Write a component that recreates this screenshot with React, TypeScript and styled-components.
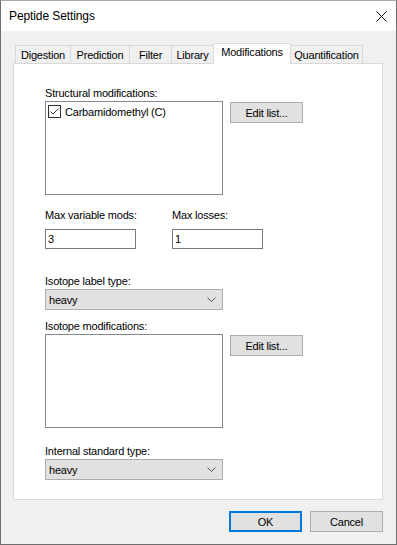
import React from "react";
import styled, { createGlobalStyle } from "styled-components";

const Global = createGlobalStyle`
  html, body { margin: 0; padding: 0; background: #ffffff; }
  * { box-sizing: border-box; }
  body { font-family: "Liberation Sans", Arial, sans-serif; font-size: 11px; color: #000; }
`;

const Window = styled.div`
  width: 397px;
  height: 545px;
  border: 1px solid #6e6e6e;
  border-top-color: #a8a8a8;
  display: flex;
  flex-direction: column;
  background: #f0f0f0;
`;

const TitleBar = styled.div`
  height: 30px;
  background: #ffffff;
  display: flex;
  align-items: center;
  justify-content: space-between;
  padding: 0 9px 0 8px;
`;

const Title = styled.span`
  font-size: 12px;
  letter-spacing: -0.1px;
  color: #000;
`;

const CloseBtn = styled.div`
  width: 12px;
  height: 12px;
  display: flex;
  align-items: center;
  justify-content: center;
`;

const Body = styled.div`
  flex: 1;
  display: flex;
  flex-direction: column;
  padding: 12px 13px 0 12px;
`;

const TabStrip = styled.div`
  height: 20px;
  display: flex;
  align-items: flex-end;
  padding-left: 2px;
  position: relative;
  z-index: 1;
`;

const Tab = styled.div<{ $w: number; $active?: boolean }>`
  width: ${(p) => p.$w}px;
  height: ${(p) => (p.$active ? 21 : 18)}px;
  margin-bottom: ${(p) => (p.$active ? -1 : 0)}px;
  margin-right: -1px;
  border: 1px solid #d9d9d9;
  border-bottom: none;
  background: ${(p) => (p.$active ? "#ffffff" : "#f0f0f0")};
  position: relative;
  z-index: ${(p) => (p.$active ? 2 : 1)};
  display: flex;
  align-items: ${(p) => (p.$active ? "flex-start" : "center")};
  justify-content: center;
  padding-top: ${(p) => (p.$active ? 2 : 0)}px;
  font-size: 11px;
  letter-spacing: -0.2px;
  white-space: nowrap;
`;

const Panel = styled.div`
  height: 437px;
  border: 1px solid #d9d9d9;
  background: #ffffff;
  padding: 22px 0 0 31px;
  display: flex;
  flex-direction: column;
`;

const Label = styled.div<{ $mt?: number }>`
  height: 15px;
  line-height: 15px;
  margin-top: ${(p) => p.$mt ?? 0}px;
  letter-spacing: -0.2px;
  white-space: nowrap;
`;

const Row = styled.div<{ $mt?: number }>`
  display: flex;
  align-items: flex-start;
  margin-top: ${(p) => p.$mt ?? 0}px;
`;

const ListBox = styled.div`
  width: 178px;
  height: 94px;
  border: 1px solid #828790;
  background: #fff;
  padding: 2px 0 0 2px;
`;

const CheckItem = styled.div`
  display: flex;
  align-items: center;
  gap: 4px;
  height: 15px;
  letter-spacing: -0.2px;
`;

const CheckBox = styled.div`
  width: 13px;
  height: 13px;
  border: 1px solid #333333;
  display: flex;
  align-items: center;
  justify-content: center;
  background: #fff;
`;

const Button = styled.div<{ $default?: boolean; $mt?: number; $ml?: number }>`
  width: 73px;
  height: 21px;
  margin-top: ${(p) => p.$mt ?? 0}px;
  margin-left: ${(p) => p.$ml ?? 0}px;
  background: #e1e1e1;
  border: ${(p) => (p.$default ? "2px solid #0078d7" : "1px solid #adadad")};
  display: flex;
  align-items: center;
  justify-content: center;
  letter-spacing: -0.2px;
`;

const Column = styled.div<{ $w: number }>`
  width: ${(p) => p.$w}px;
  display: flex;
  flex-direction: column;
`;

const TextBox = styled.div`
  width: 91px;
  height: 20px;
  margin-top: 6px;
  border: 1px solid #7a7a7a;
  background: #fff;
  padding-left: 2px;
  display: flex;
  align-items: center;
`;

const Combo = styled.div`
  width: 178px;
  height: 21px;
  border: 1px solid #adadad;
  background: #e1e1e1;
  display: flex;
  align-items: center;
  justify-content: space-between;
  padding: 0 6px 0 3px;
  letter-spacing: -0.2px;
`;

const Footer = styled.div`
  display: flex;
  justify-content: flex-end;
  gap: 8px;
  margin-top: 11px;
`;

const Chevron = () => (
  <svg width="9" height="5" viewBox="0 0 9 5">
    <path d="M0.5 0.5 L4.5 4.5 L8.5 0.5" fill="none" stroke="#555" strokeWidth="1" />
  </svg>
);

export default function App() {
  return (
    <>
      <Global />
      <Window>
        <TitleBar>
          <Title>Peptide Settings</Title>
          <CloseBtn>
            <svg width="11" height="11" viewBox="0 0 11 11">
              <path d="M0.5 0.5 L10.5 10.5 M10.5 0.5 L0.5 10.5" stroke="#111" strokeWidth="1" />
            </svg>
          </CloseBtn>
        </TitleBar>
        <Body>
          <TabStrip>
            <Tab $w={56}>Digestion</Tab>
            <Tab $w={60}>Prediction</Tab>
            <Tab $w={43}>Filter</Tab>
            <Tab $w={43}>Library</Tab>
            <Tab $w={78} $active>Modifications</Tab>
            <Tab $w={73}>Quantification</Tab>
          </TabStrip>
          <Panel>
            <Label>Structural modifications:</Label>
            <Row>
              <ListBox>
                <CheckItem>
                  <CheckBox>
                    <svg width="11" height="11" viewBox="0 0 11 11">
                      <path d="M1.5 5.5 L4 8 L9.5 2.5" fill="none" stroke="#333" strokeWidth="1" />
                    </svg>
                  </CheckBox>
                  <span>Carbamidomethyl (C)</span>
                </CheckItem>
              </ListBox>
              <Button $mt={1} $ml={7}>Edit list...</Button>
            </Row>
            <Row $mt={13}>
              <Column $w={127}>
                <Label>Max variable mods:</Label>
                <TextBox>3</TextBox>
              </Column>
              <Column $w={120}>
                <Label>Max losses:</Label>
                <TextBox>1</TextBox>
              </Column>
            </Row>
            <Label $mt={25}>Isotope label type:</Label>
            <Combo>
              <span>heavy</span>
              <Chevron />
            </Combo>
            <Label $mt={9}>Isotope modifications:</Label>
            <Row>
              <ListBox />
              <Button $mt={1} $ml={7}>Edit list...</Button>
            </Row>
            <Label $mt={16}>Internal standard type:</Label>
            <Combo>
              <span>heavy</span>
              <Chevron />
            </Combo>
          </Panel>
          <Footer>
            <Button $default>OK</Button>
            <Button>Cancel</Button>
          </Footer>
        </Body>
      </Window>
    </>
  );
}
